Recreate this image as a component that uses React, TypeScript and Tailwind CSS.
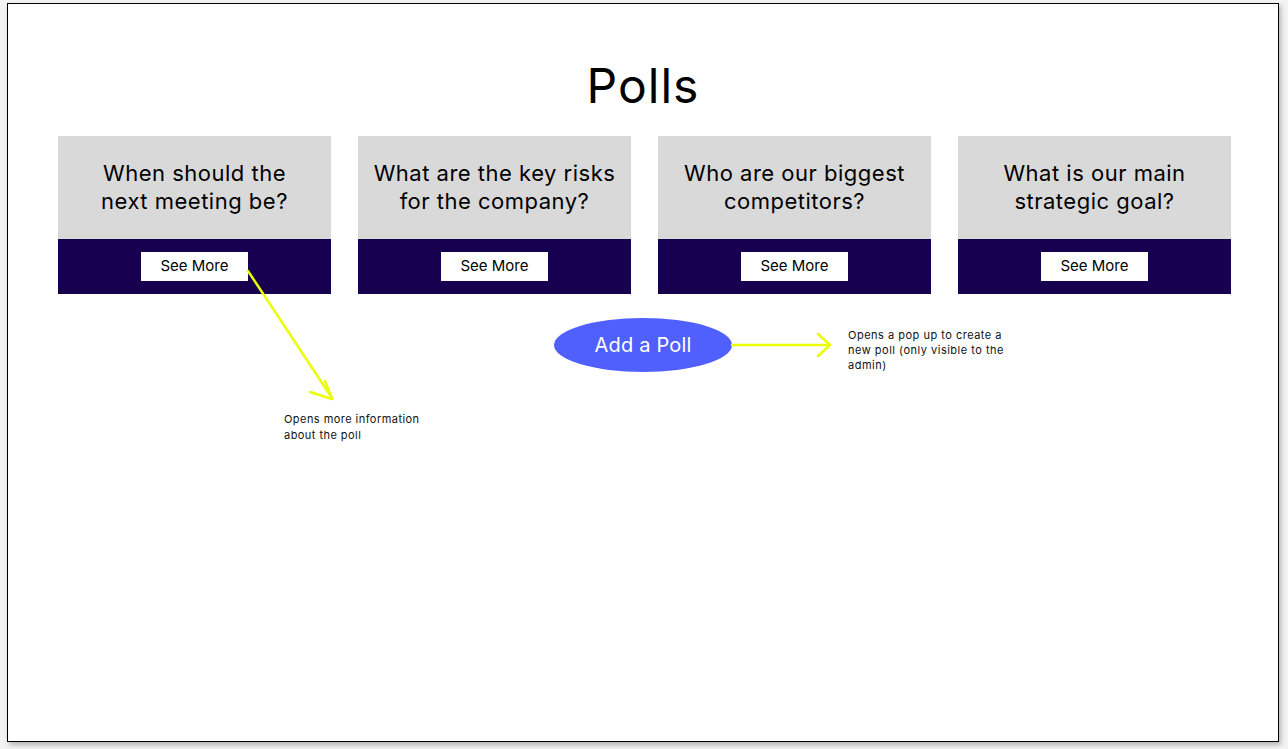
import React from "react";

const polls = [
  ["When should the", "next meeting be?"],
  ["What are the key risks", "for the company?"],
  ["Who are our biggest", "competitors?"],
  ["What is our main", "strategic goal?"],
];

const PollCard = ({ lines }: { lines: string[] }) => (
  <div className="w-[273px] flex flex-col">
    <div className="h-[103px] bg-[#d9d9d9] flex items-center justify-center text-center text-[22px] leading-[28px] tracking-[0.5px] text-black">
      <p className="-mt-[1px]">
        {lines[0]}
        <br />
        {lines[1]}
      </p>
    </div>
    <div className="h-[55px] bg-[#170050] flex items-center justify-center">
      <button className="w-[107px] h-[29px] bg-white text-[15px] text-black flex items-center justify-center">See More</button>
    </div>
  </div>
);

export default function App() {
  return (
    <div className="w-[1288px] h-[749px] bg-[#f3f3f3] pt-[3px] pl-[7px] font-['Inter',sans-serif]">
      <div className="relative w-[1272px] h-[739px] border border-black bg-white shadow-[2px_3px_5px_rgba(0,0,0,0.25)]">
        <h1 className="pt-[58px] h-[106px] text-center text-[48px] leading-[48px] tracking-[1px] text-black">Polls</h1>
        <div className="mt-[26px] ml-[50px] flex gap-[27px]">
          {polls.map((lines, i) => (
            <PollCard key={i} lines={lines} />
          ))}
        </div>
        <div className="mt-[24px] flex justify-center">
          <button className="w-[178px] h-[54px] rounded-[50%] bg-[#5060fe] text-white text-[20px] tracking-[0.2px] flex items-center justify-center">Add a Poll</button>
        </div>

        {/* annotations */}
        <svg className="absolute left-0 top-0 pointer-events-none" width="1270" height="737" fill="none" stroke="#eaff00" strokeWidth="2.5" strokeLinecap="round" strokeLinejoin="round">
          <path d="M240 267 L324 394" />
          <path d="M317 377 L324 395 L302 388" />
          <path d="M724 341 L821 341" />
          <path d="M810 330 L822 341 L810 352" />
        </svg>
        <p className="absolute left-[276px] top-[407px] w-[160px] text-[11px] leading-[16px] tracking-[0.45px] text-[#111]">
          Opens more information
          <br />
          about the poll
        </p>
        <p className="absolute left-[840px] top-[324px] w-[165px] text-[11px] leading-[15px] tracking-[0.5px] text-[#111]">
          Opens a pop up to create a
          <br />
          new poll (only visible to the
          <br />
          admin)
        </p>
      </div>
    </div>
  );
}
